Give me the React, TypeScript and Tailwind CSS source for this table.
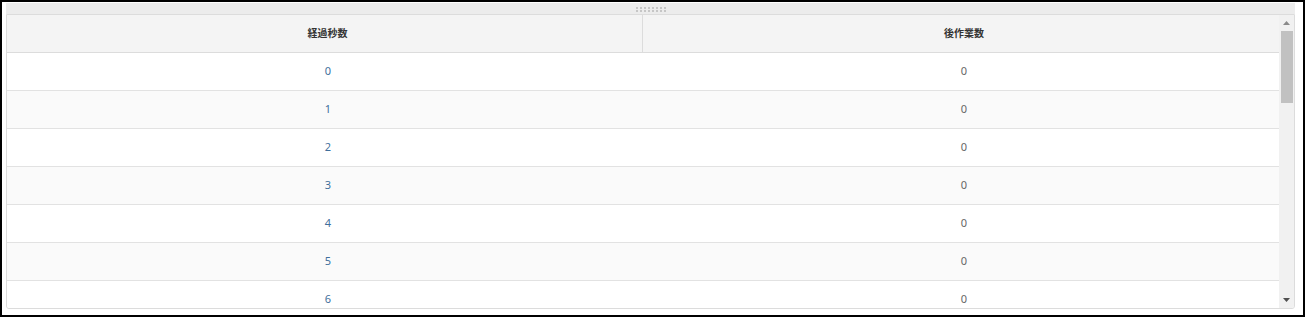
import React from "react";

const rows = [0, 1, 2, 3, 4, 5, 6];

export default function App() {
  return (
    <div
      className="w-[1305px] h-[317px] bg-white border-t-2 border-l-2 border-r-2 border-b-2 border-black flex flex-col pl-[4px] pr-[8px] pt-[1px] pb-[6px] overflow-hidden"
      style={{ fontFamily: '"Noto Sans", "Noto Sans CJK JP", sans-serif' }}
    >
      {/* grip bar */}
      <div className="h-[11px] shrink-0 bg-[#ececec] flex items-center justify-center">
        <div className="grid grid-cols-8 gap-x-[2px] gap-y-[1px] mt-[1px]">
          {Array.from({ length: 16 }).map((_, i) => (
            <div key={i} className="w-[2px] h-[2px] bg-[#c6c6c6]" />
          ))}
        </div>
      </div>
      {/* panel */}
      <div className="flex-1 min-h-0 flex border border-[#dcdcdc] rounded-b-[3px] overflow-hidden">
        <div className="flex-1 min-w-0 flex flex-col overflow-hidden">
          <div className="grid grid-cols-2 h-[38px] shrink-0 bg-[#f4f4f4] border-b border-[#dcdcdc] text-[10px] font-bold text-[#333]">
            <div className="flex items-center justify-center pl-[6px] border-r border-[#dcdcdc]">経過秒数</div>
            <div className="flex items-center justify-center pl-[6px]">後作業数</div>
          </div>
          {rows.map((r, i) => (
            <div
              key={r}
              className={`grid grid-cols-2 h-[38px] shrink-0 border-b border-[#e2e2e2] text-[11px] ${
                i % 2 === 1 ? "bg-[#fafafa]" : "bg-white"
              }`}
            >
              <div className="flex items-center justify-center pl-[6px] text-[#3f6f9c]">{r}</div>
              <div className="flex items-center justify-center pl-[6px] text-[#666666]">0</div>
            </div>
          ))}
        </div>
        {/* scrollbar */}
        <div className="w-[15px] shrink-0 bg-[#f1f1f1] flex flex-col items-center">
          <div className="h-[16px] w-full flex items-center justify-center">
            <svg width="7" height="4" viewBox="0 0 7 4">
              <polygon points="3.5,0 7,4 0,4" fill="#8a8a8a" />
            </svg>
          </div>
          <div className="w-[12px] h-[72px] bg-[#c1c1c1]" />
          <div className="flex-1" />
          <div className="h-[16px] w-full flex items-center justify-center">
            <svg width="7" height="4" viewBox="0 0 7 4">
              <polygon points="0,0 7,0 3.5,4" fill="#505050" />
            </svg>
          </div>
        </div>
      </div>
    </div>
  );
}
